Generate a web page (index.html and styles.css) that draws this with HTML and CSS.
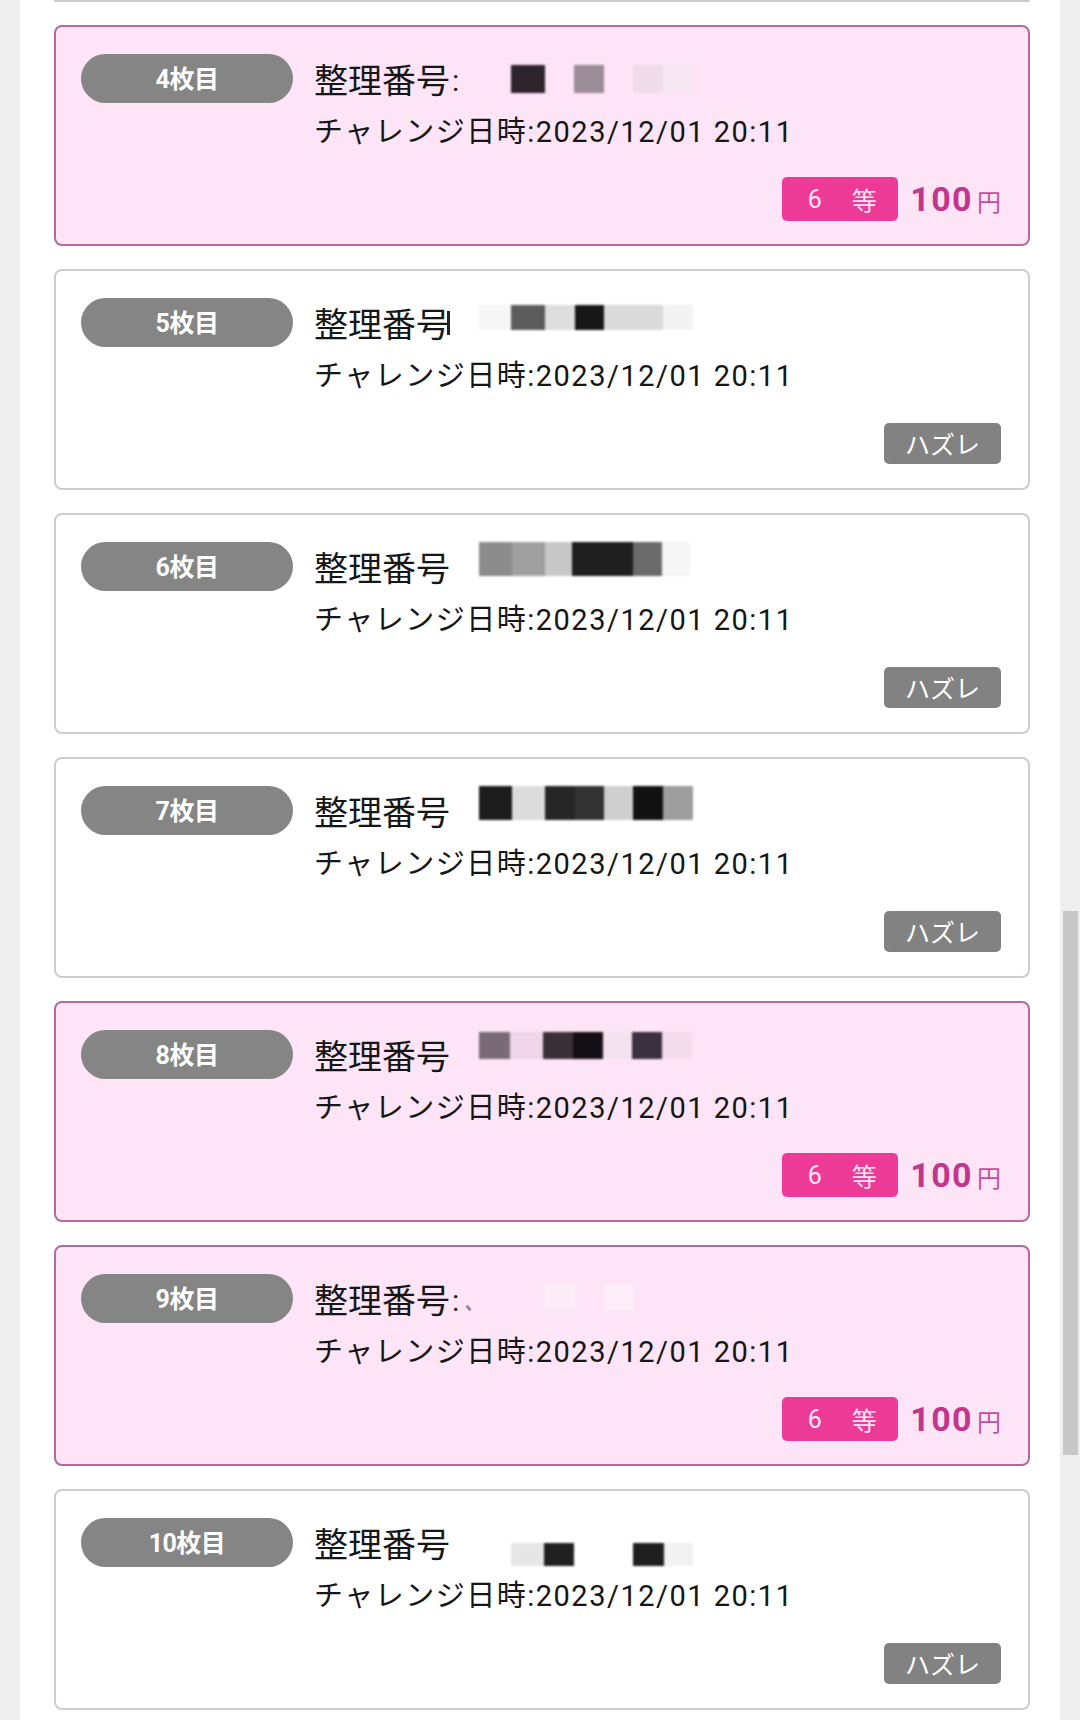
FILE: index.html
```html
<!DOCTYPE html>
<html lang="ja">
<head>
<meta charset="utf-8">
<title>チャレンジ履歴</title>
<link rel="stylesheet" href="styles.css">
</head>
<body>
<div class="page">
  <div class="list">
    <div class="card-tail"></div>

    <article class="card card--win">
      <div class="card-main">
        <div class="pill">4枚目</div>
        <div class="info">
          <div class="line1">
            <span class="label">整理番号<span class="colon">:</span></span>
            <span class="mosaic" style="margin-top:11px;height:28px">
              <i style="width:32px"></i><i style="width:34px;background:#2c232b"></i><i style="width:29px"></i><i style="width:30px;background:#9c8c98"></i><i style="width:29px"></i><i style="width:30px;background:#f0dbeb"></i><i style="width:28px;background:#f6e6f2"></i>
            </span>
          </div>
          <div class="line2">チャレンジ日時:2023/12/01 20:11</div>
        </div>
      </div>
      <div class="card-foot">
        <span class="rank"><span>6</span><span>等</span></span>
        <span class="prize"><b>100</b><small>円</small></span>
      </div>
    </article>

    <article class="card">
      <div class="card-main">
        <div class="pill">5枚目</div>
        <div class="info">
          <div class="line1">
            <span class="label">整理番号<span class="glitch"></span></span>
            <span class="mosaic" style="margin-top:7px;height:25px">
              <i style="width:32px;background:#f7f7f7"></i><i style="width:34px;background:#5c5c5c"></i><i style="width:30px;background:#dedede"></i><i style="width:29px;background:#171717"></i><i style="width:59px;background:#dadada"></i><i style="width:30px;background:#f3f3f3"></i>
            </span>
          </div>
          <div class="line2">チャレンジ日時:2023/12/01 20:11</div>
        </div>
      </div>
      <div class="card-foot">
        <span class="lose">ハズレ</span>
      </div>
    </article>

    <article class="card">
      <div class="card-main">
        <div class="pill">6枚目</div>
        <div class="info">
          <div class="line1">
            <span class="label">整理番号</span>
            <span class="mosaic" style="margin-top:0;height:34px">
              <i style="width:33px;background:#8c8c8c"></i><i style="width:33px;background:#a0a0a0"></i><i style="width:27px;background:#c8c8c8"></i><i style="width:61px;background:#1f1f1f"></i><i style="width:29px;background:#6b6b6b"></i><i style="width:28px;background:#f6f6f6"></i>
            </span>
          </div>
          <div class="line2">チャレンジ日時:2023/12/01 20:11</div>
        </div>
      </div>
      <div class="card-foot">
        <span class="lose">ハズレ</span>
      </div>
    </article>

    <article class="card">
      <div class="card-main">
        <div class="pill">7枚目</div>
        <div class="info">
          <div class="line1">
            <span class="label">整理番号</span>
            <span class="mosaic" style="margin-top:0;height:34px">
              <i style="width:33px;background:#1c1c1c"></i><i style="width:33px;background:#dcdcdc"></i><i style="width:30px;background:#262626"></i><i style="width:29px;background:#333333"></i><i style="width:29px;background:#cfcfcf"></i><i style="width:30px;background:#121212"></i><i style="width:30px;background:#9e9e9e"></i>
            </span>
          </div>
          <div class="line2">チャレンジ日時:2023/12/01 20:11</div>
        </div>
      </div>
      <div class="card-foot">
        <span class="lose">ハズレ</span>
      </div>
    </article>

    <article class="card card--win">
      <div class="card-main">
        <div class="pill">8枚目</div>
        <div class="info">
          <div class="line1">
            <span class="label">整理番号</span>
            <span class="mosaic" style="margin-top:2px;height:27px">
              <i style="width:31px;background:#7a6a78"></i><i style="width:33px;background:#efd6e8"></i><i style="width:30px;background:#3a3038"></i><i style="width:30px;background:#151015"></i><i style="width:29px;background:#f4e2ef"></i><i style="width:30px;background:#3a3040"></i><i style="width:30px;background:#f3dcec"></i>
            </span>
          </div>
          <div class="line2">チャレンジ日時:2023/12/01 20:11</div>
        </div>
      </div>
      <div class="card-foot">
        <span class="rank"><span>6</span><span>等</span></span>
        <span class="prize"><b>100</b><small>円</small></span>
      </div>
    </article>

    <article class="card card--win">
      <div class="card-main">
        <div class="pill">9枚目</div>
        <div class="info">
          <div class="line1">
            <span class="label">整理番号<span class="colon">:</span><span class="tick"></span></span>
            <span class="mosaic" style="margin-top:10px;height:26px">
              <i style="width:66px"></i><i style="width:30px;background:#fcecf8"></i><i style="width:29px"></i><i style="width:30px;background:#fdeef9"></i>
            </span>
          </div>
          <div class="line2">チャレンジ日時:2023/12/01 20:11</div>
        </div>
      </div>
      <div class="card-foot">
        <span class="rank"><span>6</span><span>等</span></span>
        <span class="prize"><b>100</b><small>円</small></span>
      </div>
    </article>

    <article class="card">
      <div class="card-main">
        <div class="pill">10枚目</div>
        <div class="info">
          <div class="line1">
            <span class="label">整理番号</span>
            <span class="mosaic" style="margin-top:25px;height:23px">
              <i style="width:32px"></i><i style="width:33px;background:#e6e6e6"></i><i style="width:30px;background:#202020"></i><i style="width:59px"></i><i style="width:31px;background:#1e1e1e"></i><i style="width:29px;background:#f2f2f2"></i>
            </span>
          </div>
          <div class="line2">チャレンジ日時:2023/12/01 20:11</div>
        </div>
      </div>
      <div class="card-foot">
        <span class="lose">ハズレ</span>
      </div>
    </article>
  </div>
  <div class="scroll-thumb"></div>
</div>
</body>
</html>
```

FILE: styles.css
```css
html, body {
  margin: 0;
  padding: 0;
}
body {
  background: #eeeeee;
  font-family: Roboto, "Noto Sans CJK JP", sans-serif;
  color: #161616;
}
.page {
  position: relative;
  width: 1080px;
  height: 1720px;
  overflow: hidden;
}
.list {
  margin: 0 20px;
  background: #ffffff;
  height: 1720px;
  padding: 0 30px 0 34px;
  display: flex;
  flex-direction: column;
  gap: 23px;
}
.card-tail {
  height: 0;
  border: 2px solid #cdcdcd;
  border-top: 0;
  border-radius: 0 0 8px 8px;
  flex: none;
}
.card {
  flex: none;
  box-sizing: border-box;
  height: 221px;
  border: 2px solid #cdcdcd;
  border-radius: 8px;
  background: #ffffff;
  padding: 27px 27px 23px 25px;
  display: flex;
  flex-direction: column;
}
.card--win {
  background: #fde4f7;
  border-color: #b46a9f;
}
.card-main {
  display: flex;
  align-items: flex-start;
  gap: 21px;
}
.pill {
  flex: none;
  box-sizing: border-box;
  width: 212px;
  height: 49px;
  padding-bottom: 4px;
  border-radius: 25px;
  background: #858585;
  color: #ffffff;
  font-weight: 700;
  font-size: 25px;
  display: flex;
  align-items: center;
  justify-content: center;
  letter-spacing: -0.5px;
}
.info {
  display: flex;
  flex-direction: column;
}
.line1 {
  height: 54px;
  display: flex;
  align-items: flex-start;
  font-size: 34px;
  line-height: 54px;
}
.label {
  flex: none;
  width: 165px;
  display: flex;
  align-items: center;
  height: 54px;
}
.colon {
  font-size: 30px;
  margin-left: 2px;
}
.glitch {
  display: inline-block;
  width: 3px;
  height: 24px;
  margin-left: -3px;
  margin-top: -4px;
  background: #222222;
}
.tick {
  display: inline-block;
  width: 3px;
  height: 6px;
  margin-left: 8px;
  margin-top: 14px;
  background: #9a8a96;
  transform: rotate(-40deg);
}
.mosaic {
  display: flex;
  filter: blur(0.8px);
}
.mosaic i {
  display: block;
  height: 100%;
}
.line2 {
  font-size: 29px;
  line-height: 48px;
  white-space: nowrap;
  letter-spacing: 1.5px;
}
.card-foot {
  margin-top: auto;
  height: 44px;
  display: flex;
  justify-content: flex-end;
  align-items: center;
}
.rank {
  width: 116px;
  height: 44px;
  box-sizing: border-box;
  border-radius: 5px;
  background: #ec3a96;
  color: #fde6f3;
  font-size: 25px;
  display: flex;
  align-items: center;
  justify-content: center;
  gap: 30px;
  padding-left: 4px;
}
.prize {
  margin-left: 12px;
  color: #c3368b;
  display: flex;
  align-items: baseline;
}
.prize b {
  font-size: 34px;
  font-weight: 700;
  letter-spacing: 1.4px;
}
.prize small {
  font-size: 24px;
  margin-left: 4px;
  color: #c2509a;
}
.lose {
  width: 117px;
  height: 41px;
  border-radius: 5px;
  background: #828282;
  color: #ffffff;
  font-size: 25px;
  display: flex;
  align-items: center;
  justify-content: center;
}
.scroll-thumb {
  position: absolute;
  left: 1063px;
  top: 911px;
  width: 15px;
  height: 544px;
  background: #c8c8c8;
}
```
